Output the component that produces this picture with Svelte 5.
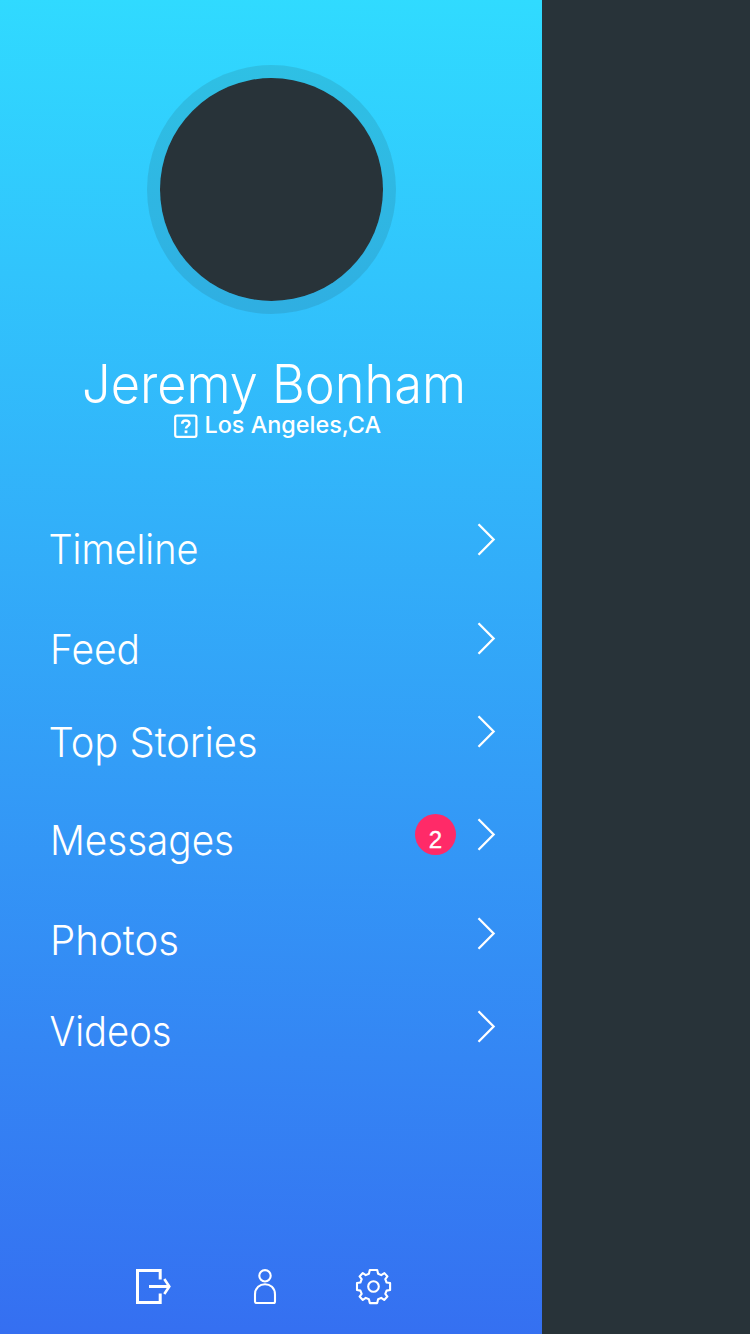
<script>
  const items = [
    { label: 'Timeline', width: 150, x: -1.5, top: 0, arrow: 0 },
    { label: 'Feed', width: 90, x: 0, top: 50, arrow: -1 },
    { label: 'Top Stories', width: 209, x: -1.5, top: 43, arrow: -1 },
    { label: 'Messages', width: 184, x: 0, top: 48, arrow: 0, badge: 2 },
    { label: 'Photos', width: 129, x: 0, top: 50, arrow: 3 },
    { label: 'Videos', width: 122, x: -0.5, top: 41, arrow: 5 }
  ];
</script>

<main class="screen">
  <aside class="drawer">
    <header class="profile">
      <div class="avatar"></div>
      <svg class="name" width="400" height="60" role="heading" aria-level="1">
        <text x="11" y="48" textLength="384" lengthAdjust="spacingAndGlyphs">Jeremy Bonham</text>
      </svg>
      <div class="place">
        <svg width="24" height="25" viewBox="0 0 24 25" fill="none" stroke="#fff">
          <rect x="1.2" y="1.7" width="21.2" height="21.2" rx="1.8" stroke-width="2.2" />
          <path d="M8.2 9.8C8.2 5.5 15.5 5.4 15.5 9.5C15.5 12.1 12 12 12 14.6" stroke-width="2.5" />
          <path d="M12 16.4V19.2" stroke-width="2.8" />
        </svg>
        <svg class="city" width="180" height="25">
          <text x="0.5" y="19" textLength="176.5" lengthAdjust="spacingAndGlyphs">Los Angeles,CA</text>
        </svg>
      </div>
    </header>

    <nav>
      {#each items as item}
        <a class="row" href="#top" style="margin-top: {item.top}px">
          <svg class="label" width="230" height="50">
            <text x={item.x} y="36" textLength={item.width} lengthAdjust="spacingAndGlyphs">{item.label}</text>
          </svg>
          <span class="end" style="margin-top: {item.arrow}px">
            {#if item.badge}<b class="badge">{item.badge}</b>{/if}
            <svg width="18" height="33" viewBox="0 0 18 33" fill="none" stroke="#fff" stroke-width="2.3">
              <path d="M1.5 1.3L16.6 16.5L1.5 31.7" />
            </svg>
          </span>
        </a>
      {/each}
    </nav>

    <footer>
      <svg width="36" height="36" viewBox="0 0 36 36" fill="none" stroke="#fff" stroke-width="3">
        <path d="M24.2 10.5V1.5H1.5V33.5H24.2V24.5M13 17.5H33" />
        <path d="M28.3 10L33.3 17.5L28.3 25" stroke-width="2.6" />
      </svg>
      <svg class="person" width="24" height="36" viewBox="0 0 24 36" fill="none" stroke="#fff" stroke-width="2.1">
        <circle cx="12" cy="6.8" r="5.7" />
        <path d="M3.5 34H20.5Q22 34 22 32.5V25.5C22 11.8 2 11.8 2 25.5V32.5Q2 34 3.5 34Z" />
      </svg>
      <svg width="36" height="36" viewBox="0 0 36 36" fill="none" stroke="#fff" stroke-width="2.1" stroke-linejoin="round">
        <circle cx="17.5" cy="17.5" r="5.3" />
        <path d="M13.8 1H21.2L22.1 4.8L25.2 6.1L28.4 4.1L31.4 7.4L29.3 10.2L30.6 13.5L34.1 14V21L30.6 21.6L29.3 24.8L31.4 27.6L28.2 30.9L25.2 28.9L22.1 30.2L21.2 34.1H13.8L12.9 30.2L9.8 28.9L6.8 30.9L3.6 27.6L5.7 24.8L4.4 21.6L1 21V14L4.4 13.5L5.7 10.2L3.6 7.4L6.8 4.1L9.8 6.1L12.9 4.8Z" />
      </svg>
    </footer>
  </aside>
</main>

<style>
  :global(body) { margin: 0; }
  .screen {
    height: 1334px;
    background: #283339;
    font-family: Inter, "Liberation Sans", sans-serif;
    color: #fff;
  }
  .drawer {
    box-sizing: border-box;
    width: 542px;
    height: 1334px;
    padding-top: 65px;
    display: flex;
    flex-direction: column;
    background: linear-gradient(181.5deg, #30dbff 0%, #356ff1 100%);
  }
  svg { display: block; flex: none; overflow: visible; }
  text { fill: #fff; }
  .profile { display: flex; flex-direction: column; align-items: center; }
  .avatar {
    box-sizing: border-box;
    width: 249px;
    height: 249px;
    border: 13px solid rgba(40, 51, 57, 0.13);
    border-radius: 50%;
    background: #283339;
    background-clip: padding-box;
  }
  .name { margin-top: 41px; font-size: 53px; font-weight: 270; }
  .place { display: flex; margin: -1px 0 0 16px; }
  .city { margin-left: 6px; font-size: 23px; font-weight: 500; }
  nav { padding: 89px 47px 0 50px; }
  .row {
    height: 50px;
    display: flex;
    justify-content: space-between;
    align-items: flex-start;
    color: inherit;
    text-decoration: none;
  }
  .label { font-size: 41.5px; font-weight: 270; }
  .end { display: flex; align-items: center; position: relative; top: -5px; gap: 21px; }
  .badge {
    box-sizing: border-box;
    width: 41px;
    height: 41px;
    padding-top: 8px;
    border-radius: 50%;
    background: #ff2a68;
    font: 500 24px/36px "Liberation Sans", sans-serif;
    -webkit-text-stroke: 0.4px #fff;
    text-align: center;
  }
  footer {
    display: flex;
    margin: auto 0 29px 136px;
  }
  .person { margin: 0 79px 0 81px; }
</style>
